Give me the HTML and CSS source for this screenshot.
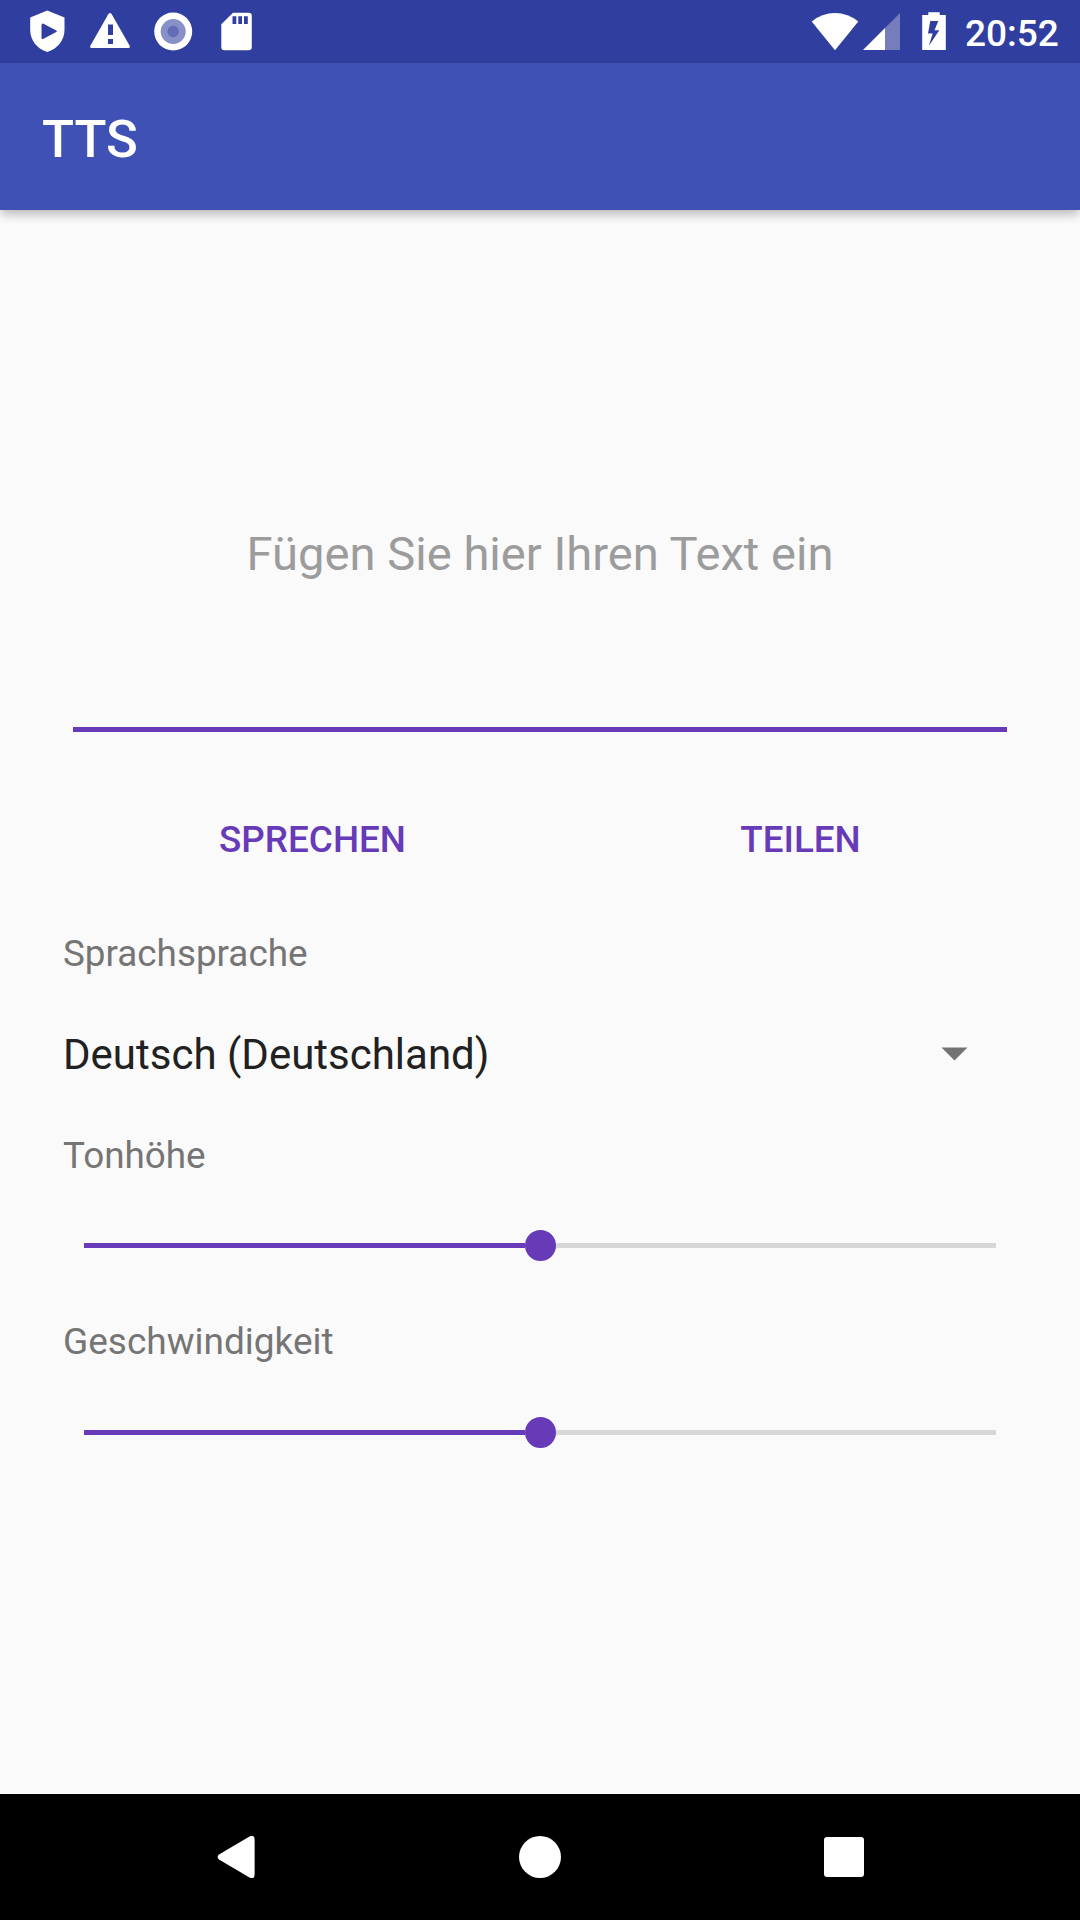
FILE: index.html
```html
<!DOCTYPE html>
<html lang="de">
<head>
<meta charset="utf-8">
<title>TTS</title>
<link rel="stylesheet" href="styles.css">
</head>
<body>
<header class="status">
  <svg class="status-icons" width="270" height="63" viewBox="0 0 270 63" fill="#fff">
    <path fill-rule="evenodd" d="M47.3 10.5 64.5 17.5V30C64.5 40 57.500 49 47.300 52 37 49 30.200 40 30.200 30V17.500ZM41.500 25.200V37.800Q41.500 40 43.500 38.800L56.300 32Q57.600 31.200 56.300 30.500L43.500 23.800Q41.500 23 41.500 25.200Z"/>
    <path fill-rule="evenodd" d="M108.400 14Q110 11.800 111.600 14L129.800 46Q130.500 48 128.500 48H91.500Q89.500 48 90.200 46ZM108 24.500V35H113V24.500ZM108 39V44H113V39Z"/>
    <circle cx="173.200" cy="31.500" r="19"/>
    <circle cx="173.200" cy="31.500" r="12.500" fill="#8890c8"/>
    <circle cx="173.200" cy="31.500" r="5.700" fill="#636cb5"/>
    <path fill-rule="evenodd" d="M233 12.700H248.500Q251.800 12.700 251.800 16V47Q251.800 50.300 248.500 50.300H224.500Q221.300 50.300 221.300 47V24.300ZM232.500 16.300V24H236.300V16.300ZM238.300 16.300V24H242V16.300ZM244 16.300V24H247.800V16.300Z"/>
  </svg>
  <div class="status-right">
    <svg width="150" height="63" viewBox="800 0 150 63" fill="#fff">
      <path d="M811.700 21.500Q822 13 835 13T858.300 21.500L835 50.300Z"/>
      <path d="M900 13V50H885V28Z" fill="#757dbc"/>
      <path d="M885 28V50H863Z"/>
      <path fill-rule="evenodd" d="M928.300 12.300H939.700V15H945.800V50H922.200V15H928.300ZM930.300 21 928 33.500H932.700L928.800 46 939.300 30.300H934.500L938.300 21Z"/>
    </svg>
    <span class="clock">20:52</span>
  </div>
</header>
<div class="appbar"><h1 class="title">TTS</h1></div>
<main class="content">
  <div class="field">Fügen Sie hier Ihren Text ein</div>
  <div class="actions">
    <button class="action">SPRECHEN</button>
    <button class="action">TEILEN</button>
  </div>
  <div class="label label-language">Sprachsprache</div>
  <div class="spinner">
    <span>Deutsch (Deutschland)</span>
    <svg width="27" height="14" viewBox="0 0 27 14"><path d="M0.500 0.500H26.500L13.500 13.500Z" fill="#737373"/></svg>
  </div>
  <div class="label label-pitch">Tonhöhe</div>
  <div class="slider"><div class="fill"></div><div class="thumb"></div><div class="rest"></div></div>
  <div class="label label-speed">Geschwindigkeit</div>
  <div class="slider"><div class="fill"></div><div class="thumb"></div><div class="rest"></div></div>
</main>
<nav class="navbar">
  <svg width="42" height="42" viewBox="0 0 42 42" fill="#fff"><path d="M34.500 0.500Q39.600-1.800 39.600 3.500V38.500Q39.600 43.800 34.500 41.500L4 23.500Q1.200 21 4 18.500Z"/></svg>
  <svg width="42" height="42" viewBox="0 0 42 42" fill="#fff"><circle cx="21" cy="21" r="21"/></svg>
  <svg width="42" height="42" viewBox="0 0 42 42" fill="#fff"><rect x="1" y="1" width="40" height="40" rx="3"/></svg>
</nav>
</body>
</html>
```
FILE: styles.css
```css
* { box-sizing: border-box; }
body {
  margin: 0;
  width: 1080px;
  height: 1920px;
  display: flex;
  flex-direction: column;
  background: #fafafa;
  font-family: Roboto, sans-serif;
  overflow: hidden;
}
svg { display: block; }
.status {
  height: 63px;
  display: flex;
  justify-content: space-between;
  background: #303f9f;
  flex: none;
}
.status-right { display: flex; width: 280px; }
.clock {
  margin-left: 15px;
  color: #fff;
  font-size: 37px;
  font-weight: 500;
  line-height: 67px;
}
.appbar {
  height: 147px;
  flex: none;
  display: flex;
  align-items: center;
  padding: 0 42px;
  background: #3f51b5;
  box-shadow: 0 5px 10px -1px rgba(0, 0, 0, 0.28);
}
.title {
  margin: 0;
  padding-top: 5px;
  color: #fff;
  font-size: 52.5px;
  font-weight: 500;
  line-height: 62px;
}
.content { flex: 1; padding: 0 63px; }
.field {
  height: 522px;
  margin: 0 10px;
  padding-top: 312px;
  border-bottom: 5px solid #673ab7;
  color: #9c9c9c;
  font-size: 47.15px;
  line-height: 64px;
  text-align: center;
}
.actions {
  display: grid;
  grid-template-columns: 488px 488px;
  margin: 44px 0 0 5.5px;
}
.action {
  height: 126px;
  padding: 0;
  border: 0;
  background: none;
  color: #673ab7;
  font: 500 36.85px Roboto, sans-serif;
}
.label {
  color: #757575;
  font-size: 36.85px;
  line-height: 48px;
}
.label-language { margin-top: 28px; }
.label-pitch { margin-top: 15px; }
.label-speed { margin-top: 48px; font-size: 37px; }
.spinner {
  height: 126px;
  margin-top: 13px;
  padding-right: 49px;
  display: flex;
  align-items: center;
  justify-content: space-between;
  color: #212121;
  font-size: 42px;
}
.slider {
  height: 49px;
  margin: 42px 21px 0;
  display: flex;
  align-items: center;
}
.label-pitch + .slider { margin-top: 41px; }
.fill, .rest { flex: 1; height: 5px; background: #673ab7; }
.rest { background: #d7d7d7; }
.thumb {
  width: 31px;
  height: 31px;
  border-radius: 50%;
  background: #673ab7;
}
.navbar {
  height: 126px;
  flex: none;
  display: grid;
  grid-template-columns: repeat(3, 304px);
  justify-content: center;
  justify-items: center;
  align-items: center;
  background: #000;
}
```
